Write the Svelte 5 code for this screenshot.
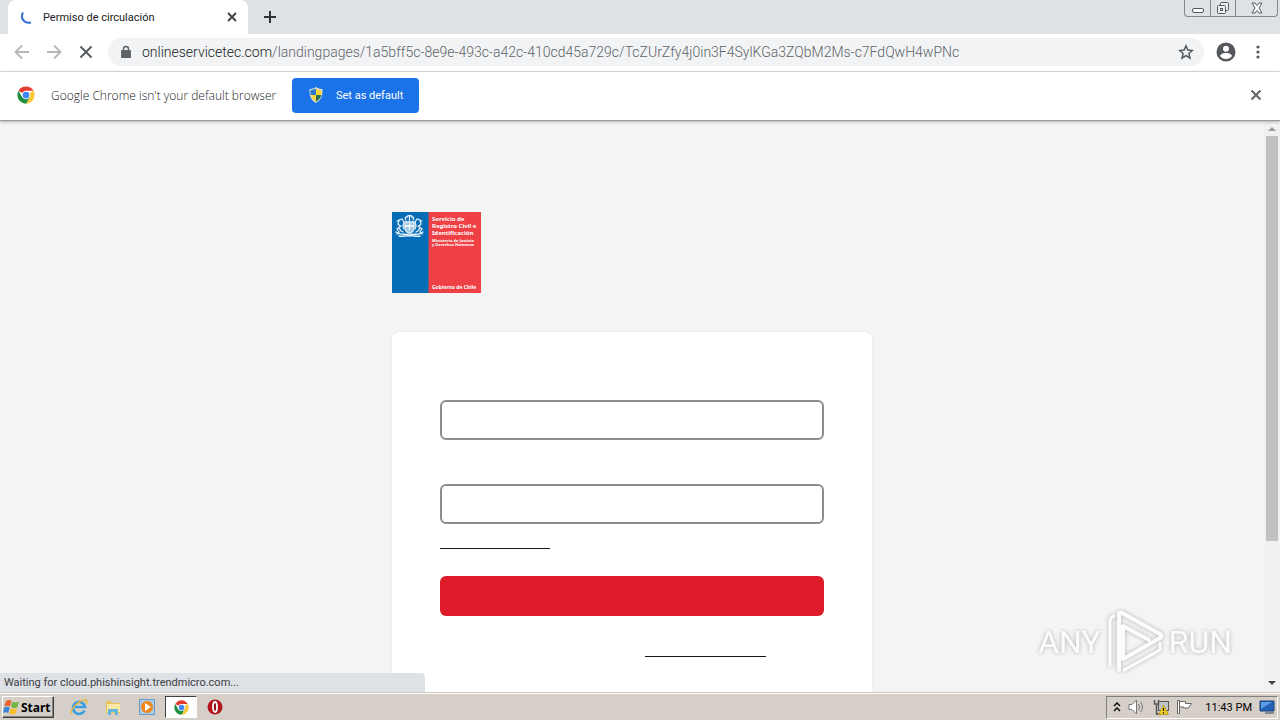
<script lang="ts">
	const tabTitle = 'Permiso de circulación';
	const host = 'onlineservicetec.com';
	const path = '/landingpages/1a5bff5c-8e9e-493c-a42c-410cd45a729c/TcZUrZfy4j0in3F4SylKGa3ZQbM2Ms-c7FdQwH4wPNc';
	const statusText = 'Waiting for cloud.phishinsight.trendmicro.com...';
	const clock = '11:43 PM';

	let first = $state('');
	let second = $state('');
</script>

{#snippet chromeIcon(size: number)}
	<svg width={size} height={size} viewBox="0 0 48 48" aria-hidden="true">
		<circle cx="24" cy="24" r="23" fill="#fff" />
		<path d="M24 24 4.1 12.5A23 23 0 0 1 43.9 12.5H24Z" fill="#e33b2e" />
		<path d="M24 24 43.9 12.5A23 23 0 0 1 24 47L34 30Z" fill="#fcc934" />
		<path d="M24 24 34 30 24 47A23 23 0 0 1 4.1 12.5L14 30Z" fill="#1e8e3e" />
		<circle cx="24" cy="24" r="11.5" fill="#fff" />
		<circle cx="24" cy="24" r="9" fill="#4285f4" />
	</svg>
{/snippet}

<div class="desktop">
	<header class="tabstrip">
		<div class="tab">
			<svg width="16" height="16" viewBox="0 0 16 16" fill="none" stroke="#2f6fd6" stroke-width="2">
				<path d="M3 3.5C0 9 4 15 11 13.5" />
			</svg>
			<span class="tab__title">{tabTitle}</span>
			<button class="icon" aria-label="Close tab">
				<svg width="16" height="16" viewBox="0 0 16 16" stroke="#3c4043" stroke-width="1.8">
					<path d="m4 4 8 8m0-8-8 8" />
				</svg>
			</button>
		</div>
		<button class="icon new-tab" aria-label="New tab">
			<svg width="16" height="16" viewBox="0 0 16 16" stroke="#303338" stroke-width="2">
				<path d="M8 2v12M2 8h12" />
			</svg>
		</button>
		<div class="window-controls">
			<button aria-label="Minimize">
				<svg width="12" height="12" viewBox="0 0 12 12" fill="#fff" stroke="#55585e">
					<rect x=".5" y="6.5" width="11" height="4" rx="1.5" />
				</svg>
			</button>
			<button aria-label="Restore">
				<svg width="14" height="14" viewBox="0 0 14 14" fill="#eceef1" stroke="#55585e">
					<rect x="4.5" y="1.5" width="8" height="8" rx="1" />
					<rect x="1.5" y="4.5" width="8" height="8" rx="1" />
					<rect x="4.5" y="7.5" width="2" height="2" />
				</svg>
			</button>
			<button class="wide" aria-label="Close window">
				<svg width="12" height="12" viewBox="0 0 12 12" fill="#fff" stroke="#55585e">
					<path d="M1 1h3l2 2.5L8 1h3L8 6l3 5H8L6 8.5 4 11H1l3-5Z" />
				</svg>
			</button>
		</div>
	</header>

	<nav class="toolbar">
		<button class="icon" aria-label="Back">
			<svg width="16" height="16" viewBox="0 0 16 16" fill="none" stroke="#b5b7ba" stroke-width="1.8">
				<path d="M15 8H2M8 1.5 1.5 8 8 14.5" />
			</svg>
		</button>
		<button class="icon" aria-label="Forward">
			<svg width="16" height="16" viewBox="0 0 16 16" fill="none" stroke="#b5b7ba" stroke-width="1.8">
				<path d="M1 8h13M8 1.5 14.5 8 8 14.5" />
			</svg>
		</button>
		<button class="icon" aria-label="Stop">
			<svg width="16" height="16" viewBox="0 0 16 16" stroke="#54575b" stroke-width="1.8">
				<path d="m2.5 2.5 11 11m0-11-11 11" />
			</svg>
		</button>
		<div class="omnibox">
			<svg width="12" height="14" viewBox="0 0 12 14">
				<rect x="1" y="5" width="10" height="8" rx="1" fill="#5f6368" />
				<path d="M3.5 6V4a2.5 2.5 0 0 1 5 0v2" fill="none" stroke="#5f6368" stroke-width="1.5" />
			</svg>
			<span class="url"><b>{host}</b>{path}</span>
			<button class="icon" aria-label="Bookmark">
				<svg width="16" height="16" viewBox="0 0 16 16" fill="none" stroke="#54575b" stroke-width="1.5">
					<path d="m8 1.8 1.8 4.3 4.6.4-3.5 3 1.1 4.6L8 11.6l-4 2.5 1.1-4.6-3.5-3 4.6-.4Z" />
				</svg>
			</button>
		</div>
		<button class="icon" aria-label="Profile">
			<svg width="20" height="20" viewBox="0 0 20 20">
				<circle cx="10" cy="10" r="9.5" fill="#54575b" />
				<circle cx="10" cy="6.8" r="3" fill="#fff" />
				<path d="M4 14c1-2.6 4-3 6-3s5 .4 6 3c-1.4 2-3.5 3-6 3s-4.6-1-6-3Z" fill="#fff" />
			</svg>
		</button>
		<button class="icon" aria-label="Menu">
			<svg width="16" height="16" viewBox="0 0 16 16" fill="#54575b">
				<circle cx="8" cy="3" r="1.6" />
				<circle cx="8" cy="8" r="1.6" />
				<circle cx="8" cy="13" r="1.6" />
			</svg>
		</button>
	</nav>

	<div class="infobar">
		{@render chromeIcon(18)}
		<span class="infobar__text">Google Chrome isn't your default browser</span>
		<button class="set-default">
			<svg width="16" height="16" viewBox="0 0 16 16">
				<path d="M8 0c2 1.5 4 2 6.5 2 .3 6-1 11-6.5 14C2.5 13 1.2 8 1.5 2 4 2 6 1.5 8 0Z" fill="#d8dde3" />
				<path d="M8 1.6V8H2.7C2.4 6.5 2.4 5 2.5 3.2 4.5 3 6.5 2.6 8 1.6Z" fill="#2a78c9" />
				<path d="M8 1.6c1.5 1 3.5 1.4 5.5 1.6.1 1.8.1 3.3-.2 4.8H8Z" fill="#f9d53b" />
				<path d="M2.7 8H8v6.7C5 13 3.2 11 2.7 8Z" fill="#f9d53b" />
				<path d="M8 8h5.3c-.5 3-2.3 5-5.3 6.7Z" fill="#2a6d4c" />
			</svg>
			Set as default
		</button>
		<button class="icon" aria-label="Dismiss">
			<svg width="16" height="16" viewBox="0 0 16 16" stroke="#66696d" stroke-width="2.2">
				<path d="m3.5 3.5 9 9m0-9-9 9" />
			</svg>
		</button>
	</div>

	<div class="viewport">
		<main>
			<svg class="logo" width="89" height="81" viewBox="0 0 89 81">
				<rect width="89" height="81" fill="#ef4045" />
				<rect width="36.5" height="81" fill="#056cb6" />
				<g fill="none" stroke="#e4eff8" stroke-width="1.3" stroke-linecap="round">
					<path d="M13 10h9v6c0 3-2 4.5-4.5 5.5C15 20.5 13 19 13 16Z" fill="#9cc4e3" />
					<path d="M14 8c-1-2-1-3 1-3 0-2 5-2 5 0 2 0 2 1 1 3M17.5 4v5" />
					<path d="M11 20c-3-1-4-3-3-6L6 12l1-4 3-1 2 3-1 4 1 3M8 8 5 9M9 14l-4 3 2 3M7 20l-2 2" />
					<path d="M24 20c3-1 4-3 3-6l2-2-1-4-3-1-2 3 1 4-1 3m4-9 3 1m-4 5 4 3-2 3m0 0 2 2" />
					<path d="M4 20c4 4 9 1 13.5 3C22 21 27 24 31 20M7 24c4 1 7-1 10.5 0 3.5-1 6.5 1 10.5 0" />
					<path d="M13 14h9M17.5 12v6" stroke="#fff" />
				</g>
				<g fill="#fff" font-weight="700">
					<g font-size="6">
						<text x="40" y="9">Servicio de</text>
						<text x="40" y="16">Registro Civil e</text>
						<text x="40" y="23">Identificación</text>
					</g>
					<g font-size="4">
						<text x="40" y="30">Ministerio de Justicia</text>
						<text x="40" y="34">y Derechos Humanos</text>
					</g>
					<text x="40" y="77" font-size="5">Gobierno de Chile</text>
				</g>
			</svg>
			<form class="card" onsubmit={(e) => e.preventDefault()}>
				<input type="text" aria-label="First field" autocomplete="off" bind:value={first} />
				<input type="text" aria-label="Second field" autocomplete="off" bind:value={second} />
				<a class="blank-link" href="#top" aria-label="Help">&nbsp;</a>
				<button class="submit" type="button" aria-label="Continue"></button>
				<p class="card__foot">
					<span></span>
					<a class="blank-link blank-link--wide" href="#top" aria-label="More">&nbsp;</a>
				</p>
			</form>
		</main>
		<div class="scrollbar">
			<svg width="16" height="15" viewBox="0 0 16 15"><path d="M4 10h8L8 6Z" fill="#999" /></svg>
			<div class="scrollbar__thumb"></div>
			<svg width="16" height="16" viewBox="0 0 16 16"><path d="M4 5h8l-4 4Z" fill="#444" /></svg>
		</div>
		<div class="status">{statusText}</div>
		<div class="watermark">
			<span>ANY</span>
			<svg width="60" height="64" viewBox="0 0 60 64" fill="none" stroke="#fff" stroke-width="4" stroke-linejoin="round" stroke-linecap="round">
				<path d="M14 60V4q0-2 3-1l38 21q3 2 0 4L18 49V16l26 14" />
				<path d="M5 55V10q1-3 4-4M19 60l36-20V33" stroke-width="3" />
			</svg>
			<span>RUN</span>
		</div>
	</div>

	<footer class="taskbar">
		<button class="start">
			<svg width="18" height="16" viewBox="0 0 18 16">
				<path d="M3 2c2-1.5 4-1.2 5.5 0L7 7.5C5.5 6.5 3.5 6.3 1.5 7.5Z" fill="#e8622c" />
				<path d="M9.5 2.5c2 1.2 4 1.2 6.5 0L14.5 8c-2 1.2-4.5 1.2-6.5 0Z" fill="#74b643" />
				<path d="M1.2 8.5c2-1.2 4-1 5.5 0L5.2 14c-1.5-1-3.2-1.2-5.2 0Z" fill="#3c85d4" />
				<path d="M7.7 9c2 1.2 4.5 1.2 6.5 0l-1.5 5.5c-2 1.2-4.5 1.2-6.5 0Z" fill="#f5bf2c" />
			</svg>
			Start
		</button>
		<div class="launchers">
			<button aria-label="Internet Explorer">
				<svg width="18" height="18" viewBox="0 0 18 18" fill="none">
					<path d="M14.5 12.5A6 6 0 1 1 15 9H5" stroke="#3a9fe0" stroke-width="2.6" />
					<path d="M2 16C-1 13 8 2 15 2c3 0 2 2 1 4" stroke="#e7b93a" stroke-width="1.4" />
				</svg>
			</button>
			<button aria-label="Explorer">
				<svg width="18" height="18" viewBox="0 0 18 18">
					<path d="M2 3h5l1 2h8v10H2Z" fill="#e6c65c" />
					<path d="M3 6h13v8H3Z" fill="#f9e9a4" />
					<path d="M4 17v-6h10v6h-3v-3H7v3Z" fill="#65b6df" />
				</svg>
			</button>
			<button aria-label="Media Player">
				<svg width="18" height="18" viewBox="0 0 18 18">
					<rect x="1.5" y="1.5" width="15" height="15" fill="#a9cbe5" stroke="#6c9cc4" />
					<circle cx="9" cy="9" r="6" fill="#f08519" />
					<path d="m7 5 6 4-6 4Z" fill="#fff" />
				</svg>
			</button>
			<button class="active" aria-label="Chrome">{@render chromeIcon(15)}</button>
			<button aria-label="Opera">
				<svg width="18" height="18" viewBox="0 0 18 18">
					<circle cx="9" cy="9" r="7.5" fill="#b3141b" />
					<ellipse cx="9" cy="9" rx="2" ry="5" fill="#8f1016" stroke="#fff" stroke-width="1.8" />
				</svg>
			</button>
		</div>
		<div class="tray">
			<svg width="8" height="12" viewBox="0 0 8 12" fill="none" stroke="#000" stroke-width="1.4">
				<path d="m1 5 3-3 3 3M1 10l3-3 3 3" />
			</svg>
			<svg width="18" height="16" viewBox="0 0 18 16" fill="#fff" stroke="#777">
				<path d="M1 5.5h3L8.5 1v14L4 10.5H1Z" />
				<path d="M10.5 5q2 3 0 6M12.5 3q4 5 0 10" fill="none" />
			</svg>
			<svg width="16" height="16" viewBox="0 0 16 16">
				<rect x="5.5" y="2.5" width="10" height="9" fill="#bfc4c8" stroke="#555" />
				<path d="M1.5 1v4h4V1M3.5 5v10h5" fill="none" stroke="#555" stroke-width="1.5" />
				<path d="m10.5 6 5 9.5h-10Z" fill="#f8cf1c" stroke="#9c8114" stroke-width=".6" />
				<path d="M10.5 9v3m0 1v1.5" stroke="#222" stroke-width="1.3" />
			</svg>
			<svg width="17" height="16" viewBox="0 0 17 16" fill="#fff" stroke="#666">
				<path d="M1.5 1.5h2v13h-2ZM3.5 2.5h6v2h6l-3 4.5h-5V8h-4Z" />
			</svg>
			<time>{clock}</time>
			<svg width="16" height="14" viewBox="0 0 16 14">
				<path d="M1 1h14v10H1Z" fill="#2262b6" stroke="#173e78" />
				<path d="M2 2h11L2 9Z" fill="#5b9be0" />
				<path d="M6 13h9" stroke="#34465c" />
			</svg>
		</div>
	</footer>
</div>

<style>
	:global(body) {
		margin: 0;
	}

	.desktop {
		display: flex;
		flex-direction: column;
		height: 100vh;
		overflow: hidden;
		background: #f4f4f4;
		color: #202124;
		font-family: Roboto, 'Noto Sans', sans-serif;
		font-size: 11px;
	}

	.desktop * {
		box-sizing: border-box;
	}

	button {
		font: inherit;
		padding: 0;
		border: 0;
		background: none;
	}

	svg {
		display: block;
		flex: none;
	}

	.icon {
		display: flex;
		flex: none;
		justify-content: center;
		width: 16px;
	}

	.tabstrip {
		display: flex;
		align-items: center;
		height: 34px;
		padding: 0 2px 0 8px;
		background: #dee1e6;
	}

	.tab {
		display: flex;
		align-items: center;
		gap: 7px;
		width: 240px;
		height: 34px;
		padding: 0 8px 0 12px;
		border-radius: 8px 8px 0 0;
		background: #fff;
	}

	.tab__title {
		flex: 1;
	}

	.new-tab {
		margin-left: 14px;
	}

	.window-controls {
		display: flex;
		align-self: flex-start;
		height: 17px;
		margin-left: auto;
		border: 1px solid #85888e;
		border-top: 0;
		border-radius: 0 0 4px 4px;
	}

	.window-controls button {
		display: flex;
		align-items: center;
		justify-content: center;
		width: 25px;
	}

	.window-controls button + button {
		border-left: 1px solid #85888e;
	}

	.window-controls .wide {
		width: 42px;
	}

	.toolbar {
		display: flex;
		align-items: center;
		gap: 16px;
		height: 38px;
		padding: 0 14px 1px;
		border-bottom: 1px solid #dadce0;
		background: #fff;
	}

	.omnibox {
		display: flex;
		flex: 1;
		align-items: center;
		gap: 10px;
		min-width: 0;
		height: 28px;
		margin: 0 -2px;
		padding: 0 10px 0 12px;
		border-radius: 14px;
		background: #f1f3f4;
	}

	.url {
		flex: 1;
		overflow: hidden;
		color: #5f6368;
		font-size: 14px;
		font-weight: 300;
		white-space: nowrap;
	}

	.url b {
		color: #202124;
		font-weight: inherit;
	}

	.infobar {
		display: flex;
		flex: none;
		align-items: center;
		height: 49px;
		padding: 0 16px 2px 17px;
		border-bottom: 1px solid #999;
		background: #fff;
		box-shadow: 0 1px 3px rgba(0, 0, 0, 0.25);
		z-index: 1;
	}

	.infobar__text {
		width: 241px;
		margin-left: 16px;
		font-family: 'Open Sans', 'Noto Sans', sans-serif;
		font-size: 12px;
		font-weight: 300;
		white-space: nowrap;
	}

	.set-default {
		display: flex;
		align-items: center;
		gap: 12px;
		height: 35px;
		padding: 0 16px;
		border-radius: 4px;
		background: #1a73e8;
		color: #fff;
		white-space: nowrap;
	}

	.infobar > .icon {
		margin-left: auto;
	}

	.viewport {
		position: relative;
		display: flex;
		flex: 1;
		min-height: 0;
		overflow: hidden;
	}

	main {
		display: flex;
		flex: 1;
		flex-direction: column;
		align-items: center;
		padding-top: 91px;
	}

	.logo {
		align-self: flex-start;
		margin-left: calc(50% - 240px);
		font-family: 'Noto Sans', sans-serif;
	}

	.card {
		display: flex;
		flex: none;
		flex-direction: column;
		align-items: flex-start;
		width: 100%;
		max-width: 480px;
		margin-top: 39px;
		padding: 68px 48px;
		border-radius: 8px;
		background: #fff;
		box-shadow: 0 0 3px rgba(0, 0, 0, 0.06);
	}

	.card input {
		width: 100%;
		height: 40px;
		padding: 0 12px;
		border: 2px solid #8d8d8d;
		border-radius: 6px;
		background: #fff;
		font: inherit;
		font-size: 16px;
	}

	.card input + input {
		margin-top: 44px;
	}

	.blank-link {
		width: 110px;
		height: 25px;
		border-bottom: 1px solid #161616;
		text-decoration: none;
	}

	.blank-link--wide {
		width: 121px;
	}

	.submit {
		width: 100%;
		height: 40px;
		margin-top: 27px;
		border-radius: 6px;
		background: #dd1b2a;
	}

	.card__foot {
		display: flex;
		justify-content: center;
		width: 100%;
		margin: 16px 0 0;
	}

	.card__foot span {
		width: 146px;
	}

	.scrollbar {
		display: flex;
		flex-direction: column;
		width: 16px;
		background: #f1f1f1;
	}

	.scrollbar__thumb {
		height: 71%;
		margin: 0 2px auto;
		background: #c1c1c1;
	}

	.status {
		position: absolute;
		bottom: 0;
		left: 0;
		width: 425px;
		height: 19px;
		padding-left: 4px;
		border-top-right-radius: 4px;
		background: #dee1e6;
		color: #3c4043;
		line-height: 20px;
	}

	.watermark {
		position: absolute;
		right: 48px;
		bottom: 18px;
		display: flex;
		align-items: center;
		gap: 4px;
		color: #fff;
		font-size: 32px;
		filter: drop-shadow(0 0 2px rgba(0, 0, 0, 0.35));
		opacity: 0.8;
	}

	.taskbar {
		display: flex;
		flex: none;
		align-items: center;
		height: 28px;
		padding: 1px 2px 0;
		border-top: 1px solid #c8c8c0;
		background: #d5cfc8;
		box-shadow: inset 0 1px #fff;
		color: #000;
	}

	.start {
		display: flex;
		align-items: center;
		width: 52px;
		height: 22px;
		border: 1px solid;
		border-color: #fff #404040 #404040 #fff;
		box-shadow: inset -1px -1px #808080;
		font-family: 'Noto Sans', sans-serif;
		font-size: 12px;
		font-weight: 700;
	}

	.launchers {
		display: flex;
		gap: 2px;
		margin-left: 9px;
	}

	.launchers button {
		display: flex;
		align-items: center;
		justify-content: center;
		width: 32px;
		height: 22px;
	}

	.launchers .active {
		border: 1px solid;
		border-color: #404040 #fff #fff #404040;
		background: #fff;
	}

	.tray {
		display: flex;
		align-items: center;
		gap: 7px;
		height: 23px;
		margin-left: auto;
		padding: 0 2px 0 6px;
		border: 1px solid;
		border-color: #808080 #fff #fff #808080;
	}

	.tray time {
		margin-left: 5px;
	}
</style>
